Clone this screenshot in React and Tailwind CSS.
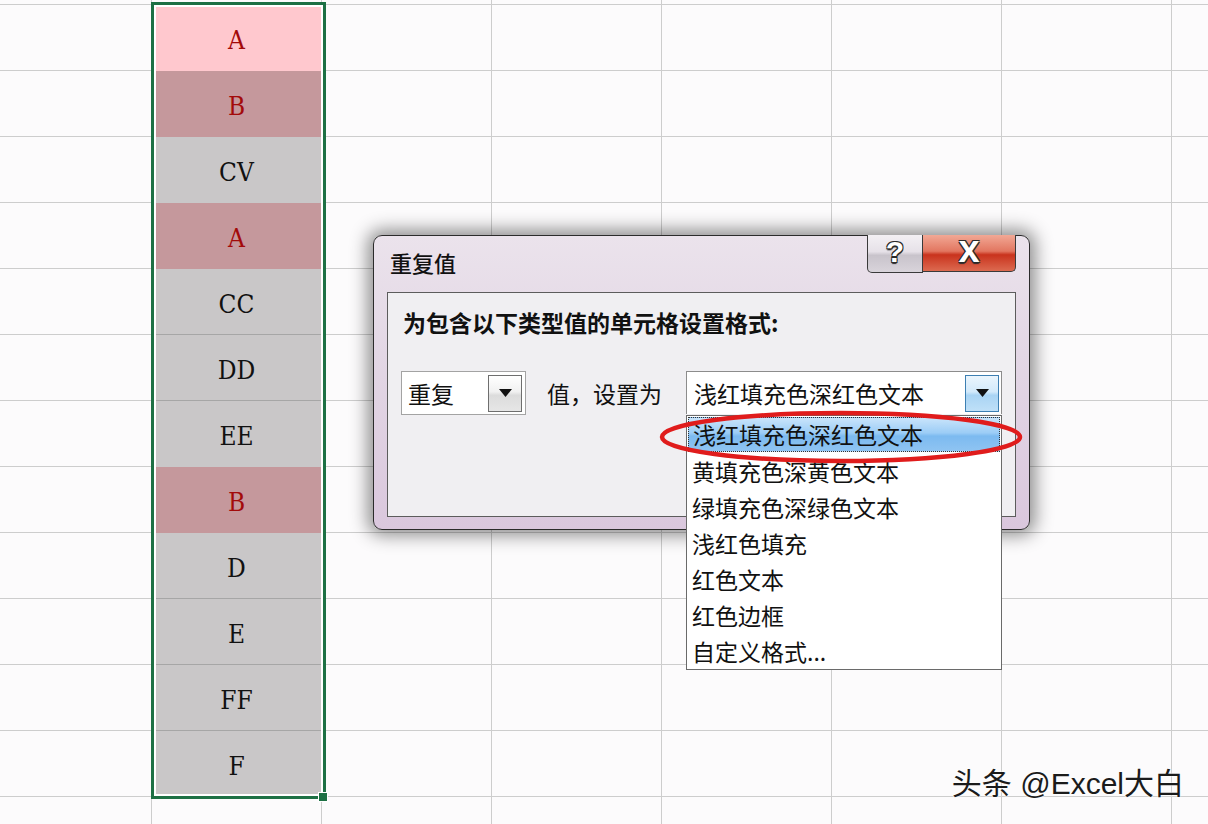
import React from 'react';

const cells = [
  { t: 'A', k: 'active' },
  { t: 'B', k: 'dup' },
  { t: 'CV', k: 'n' },
  { t: 'A', k: 'dup' },
  { t: 'CC', k: 'n' },
  { t: 'DD', k: 'n' },
  { t: 'EE', k: 'n' },
  { t: 'B', k: 'dup' },
  { t: 'D', k: 'n' },
  { t: 'E', k: 'n' },
  { t: 'FF', k: 'n' },
  { t: 'F', k: 'n' },
];

const fills = {
  active: 'bg-[#ffc8ce] text-[#a30a0a]',
  dup: 'bg-[#c5989c] text-[#a30a0a]',
  n: 'bg-[#c9c7c8] text-[#111]',
};

const options = [
  '浅红填充色深红色文本',
  '黄填充色深黄色文本',
  '绿填充色深绿色文本',
  '浅红色填充',
  '红色文本',
  '红色边框',
  '自定义格式...',
];

const cjk = "[font-family:'Noto_Sans_CJK_SC','Noto_Sans',sans-serif]";
const outline = '[text-shadow:1px_1px_0_#2a2a2a,-1px_-1px_0_#2a2a2a,1px_-1px_0_#2a2a2a,-1px_1px_0_#2a2a2a,0_2px_1px_#2a2a2a]';

const Arrow = () => (
  <svg width="13" height="8" viewBox="0 0 13 8">
    <polygon points="0,0 13,0 6.5,8" fill="#111" />
  </svg>
);

const GridRow = ({ h, cell, last }) => (
  <div className={`flex ${h}`}>
    <div className="w-[152px] shrink-0 border-r border-b border-[#cdcdcd]" />
    {cell ? (
      <div
        className={`w-[170px] shrink-0 border-r border-r-[#cdcdcd] border-b flex items-center justify-center pt-[5px] [font-family:'DejaVu_Serif_Condensed','DejaVu_Serif',serif] [font-stretch:condensed] text-[26px] leading-none ${fills[cell.k]} ${
          cell.k === 'n' && last === 'n' ? 'border-b-[#a6a6a6]' : 'border-b-transparent'
        }`}
      >
        {cell.t}
      </div>
    ) : (
      <div className="w-[170px] shrink-0 border-r border-b border-[#cdcdcd]" />
    )}
    {[0, 1, 2, 3, 4, 5].map((i) => (
      <div key={i} className="w-[170px] shrink-0 border-r border-b border-[#cdcdcd]" />
    ))}
  </div>
);

export default function App() {
  return (
    <div className="relative w-[1208px] h-[824px] overflow-hidden bg-[#fcfbfc]">
      {/* sheet */}
      <div className="flex flex-col">
        <GridRow h="h-[5px]" />
        {cells.map((c, i) => (
          <GridRow key={i} h="h-[66px]" cell={c} last={cells[i + 1] ? cells[i + 1].k : null} />
        ))}
        <GridRow h="h-[40px]" />
      </div>

      {/* selection */}
      <div className="absolute left-[151px] top-[2px] w-[175px] h-[797px] border-[3px] border-[#1d7044] shadow-[inset_0_0_0_2px_#ffffff]" />
      <div className="absolute left-[318px] top-[792px] w-[10px] h-[10px] bg-[#1d7044] border border-white" />

      {/* dialog */}
      <div className="absolute left-[373px] top-[235px] w-[657px] h-[295px] rounded-[9px] border border-[#2b2b2b] bg-[linear-gradient(to_bottom,#ebe3ec,#e3d7e5_40%,#dac7dd)] shadow-[0_0_18px_5px_rgba(0,0,0,0.45)] flex flex-col px-[13px] pb-[12px]">
        <div className="h-[56px] flex justify-between">
          <div className={`${cjk} pl-[3px] pt-[15px] text-[22px] font-medium leading-none text-[#111]`}>重复值</div>
          <div className="flex -mt-px">
            <div className={`w-[56px] h-[38px] rounded-bl-[5px] border border-[#3a3a3a] border-t-0 bg-[linear-gradient(to_bottom,#f3f0f4_0%,#e6e1e8_45%,#c8c3cb_55%,#d9d4db_100%)] flex items-center justify-center pb-[4px] [font-family:'Liberation_Sans',sans-serif] font-bold text-[30px] leading-none text-white ${outline}`}>
              ?
            </div>
            <div className={`w-[93px] h-[37px] rounded-br-[5px] border border-l-0 border-[#3a3a3a] border-t-0 bg-[linear-gradient(to_bottom,#f2a895_0%,#e27660_45%,#c9331d_55%,#dc6a50_100%)] flex items-center justify-center pb-[8px] [font-family:'Liberation_Sans',sans-serif] font-black text-[38px] leading-none text-white ${outline}`}>
              x
            </div>
          </div>
        </div>

        <div className="flex-1 border border-[#5c5c5c] bg-[#f0eff2] px-[13px] pt-[18px]">
          <div className={`${cjk} ml-[2px] text-[23px] font-bold leading-none text-[#111]`}>为包含以下类型值的单元格设置格式:</div>

          <div className="mt-[37px] flex items-start">
            <div className="w-[125px] h-[44px] border border-[#a3a3a3] bg-white flex items-center justify-between pl-[6px] pr-[3px]">
              <span className={`${cjk} text-[23px] leading-none text-[#111]`}>重复</span>
              <div className="w-[34px] h-[37px] border border-[#6e6e6e] bg-[linear-gradient(to_bottom,#ffffff,#f1f1f1_45%,#dcdcdc_55%,#e6e6e6)] flex items-center justify-center">
                <Arrow />
              </div>
            </div>

            <div className={`${cjk} ml-[21px] h-[44px] flex items-center text-[23px] leading-none text-[#111]`}>值，设置为</div>

            <div className="relative ml-auto w-[316px] h-[43px] border border-[#8c8c8c] border-b-0 bg-white flex items-center justify-between pl-[7px] pr-[2px]">
              <span className={`${cjk} text-[23px] leading-none text-[#111]`}>浅红填充色深红色文本</span>
              <div className="w-[34px] h-[37px] border border-[#3d7fb2] bg-[linear-gradient(to_bottom,#eaf5fd,#d3eafb_45%,#a9d4f4_55%,#bfe0f8)] flex items-center justify-center">
                <Arrow />
              </div>

              <div className="absolute left-[-1px] top-[43px] w-[316px] h-[255px] border border-[#6a6a6a] bg-white p-px flex flex-col z-10">
                {options.map((o, i) => (
                  <div
                    key={o}
                    className={`${cjk} shrink-0 flex items-center pl-[4px] text-[23px] leading-none text-[#111] ${
                      i === 0
                        ? 'h-[35px] mb-px border border-dotted border-[#333] bg-[linear-gradient(to_bottom,#c9e4fb,#9ccdf6_45%,#7cbaf0_55%,#8fc4f2)]'
                        : 'h-[36px]'
                    }`}
                  >
                    {o}
                  </div>
                ))}
              </div>
            </div>
          </div>
        </div>
      </div>

      {/* annotation */}
      <svg className="absolute left-[659px] top-[409px] z-20" width="364" height="56" viewBox="0 0 364 56">
        <ellipse cx="182" cy="28" rx="179" ry="24" fill="none" stroke="#e01c1c" strokeWidth="4.5" />
      </svg>

      {/* watermark */}
      <div className="absolute right-[24px] top-[769px] [font-family:'Liberation_Sans','Noto_Sans_CJK_SC',sans-serif] text-[30px] leading-none text-[#1b1b1b] [text-shadow:0_0_2px_#ffffff,0_0_2px_#ffffff]">
        头条 @Excel大白
      </div>
    </div>
  );
}
